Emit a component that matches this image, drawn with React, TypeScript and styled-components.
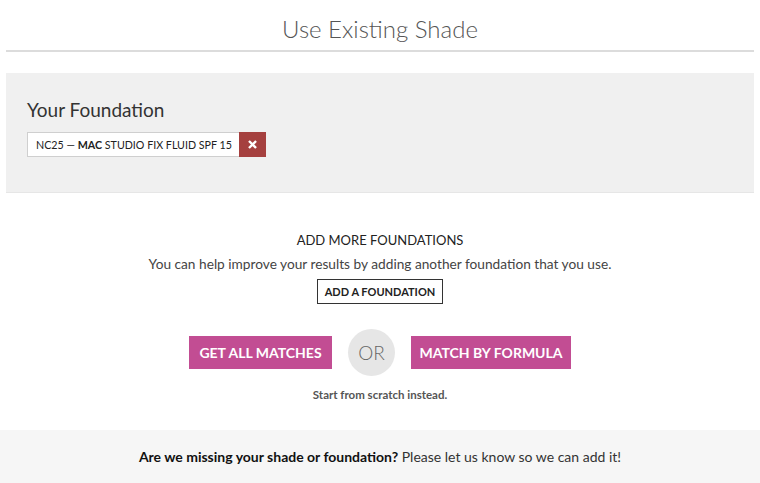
import React from 'react';
import styled, { createGlobalStyle } from 'styled-components';

const GlobalStyle = createGlobalStyle`
  body {
    margin: 0;
    background: #fff;
    font-family: Lato, "Open Sans", Arial, sans-serif;
    color: #333;
  }
`;

const Page = styled.div`
  width: 760px;
  height: 483px;
  display: flex;
  flex-direction: column;
  overflow: hidden;
`;

const Header = styled.div`
  margin: 0 6px;
  height: 52px;
  border-bottom: 2px solid #dcdcdc;
  display: flex;
  align-items: center;
  justify-content: center;
  box-sizing: border-box;
  padding-top: 6px;
`;

const Title = styled.h1`
  margin: 0;
  font-size: 24px;
  font-weight: 300;
  color: #555;
`;

const Panel = styled.section`
  margin: 21px 6px 0;
  height: 120px;
  box-sizing: border-box;
  background: #f0f0f0;
  border-bottom: 1px solid #e6e6e6;
  padding: 25px 21px 0;
`;

const PanelTitle = styled.h2`
  margin: 0 0 10px;
  font-size: 19px;
  font-weight: 400;
  color: #333;
  line-height: 24px;
`;

const Tag = styled.div`
  display: inline-flex;
  height: 25px;
`;

const TagLabel = styled.span`
  display: flex;
  align-items: center;
  padding: 0 7px 0 8px;
  background: #fff;
  border: 1px solid #cfcfcf;
  border-right: none;
  font-size: 10.7px;
  color: #222;
  white-space: pre;

  b {
    font-weight: 700;
  }
`;

const RemoveButton = styled.button`
  width: 27px;
  height: 25px;
  border: none;
  padding: 0;
  background: #a5403f;
  color: #fff;
  display: flex;
  align-items: center;
  justify-content: center;
  cursor: pointer;
`;

const Middle = styled.section`
  flex: 1;
  display: flex;
  flex-direction: column;
  align-items: center;
  padding-top: 39px;
`;

const SectionHeading = styled.h3`
  margin: 0;
  font-size: 13px;
  font-weight: 400;
  color: #222;
  line-height: 16px;
`;

const Helper = styled.p`
  margin: 7px 0 0;
  font-size: 13.7px;
  color: #444;
  line-height: 18px;
`;

const OutlineButton = styled.button`
  margin-top: 6px;
  height: 25px;
  padding: 0 7px;
  background: #fff;
  border: 1px solid #333;
  font-family: inherit;
  font-size: 11px;
  font-weight: 700;
  color: #222;
  cursor: pointer;
`;

const ChoiceRow = styled.div`
  margin-top: 25px;
  display: flex;
  align-items: center;
  gap: 16px;
`;

const PinkButton = styled.button<{ $width: number }>`
  width: ${(p) => p.$width}px;
  height: 33px;
  border: none;
  background: #c24d93;
  color: #fff;
  font-family: inherit;
  font-size: 14px;
  font-weight: 700;
  cursor: pointer;
`;

const OrBadge = styled.span`
  width: 47px;
  height: 47px;
  border-radius: 50%;
  background: #e6e6e6;
  color: #666;
  font-size: 19px;
  font-weight: 300;
  display: flex;
  align-items: center;
  justify-content: center;
`;

const ScratchLink = styled.a`
  margin-top: 12px;
  font-size: 11.5px;
  font-weight: 700;
  color: #555;
  text-decoration: none;
`;

const Footer = styled.footer`
  height: 53px;
  background: #f6f6f6;
  display: flex;
  align-items: center;
  justify-content: center;
  font-size: 14px;
  color: #333;

  b {
    color: #111;
    font-weight: 700;
  }
`;

const CrossIcon = () => (
  <svg width="9" height="9" viewBox="0 0 10 10">
    <path d="M2 2 L8 8 M8 2 L2 8" stroke="#fff" strokeWidth="2.6" strokeLinecap="square" />
  </svg>
);

const App = (): JSX.Element => {
  return (
    <Page>
      <GlobalStyle />
      <Header>
        <Title>Use Existing Shade</Title>
      </Header>
      <Panel>
        <PanelTitle>Your Foundation</PanelTitle>
        <Tag>
          <TagLabel>
            NC25 — <b>MAC</b> STUDIO FIX FLUID SPF 15
          </TagLabel>
          <RemoveButton aria-label="Remove">
            <CrossIcon />
          </RemoveButton>
        </Tag>
      </Panel>
      <Middle>
        <SectionHeading>ADD MORE FOUNDATIONS</SectionHeading>
        <Helper>You can help improve your results by adding another foundation that you use.</Helper>
        <OutlineButton>ADD A FOUNDATION</OutlineButton>
        <ChoiceRow>
          <PinkButton $width={143}>GET ALL MATCHES</PinkButton>
          <OrBadge>OR</OrBadge>
          <PinkButton $width={160}>MATCH BY FORMULA</PinkButton>
        </ChoiceRow>
        <ScratchLink href="#">Start from scratch instead.</ScratchLink>
      </Middle>
      <Footer>
        <span>
          <b>Are we missing your shade or foundation?</b> Please let us know so we can add it!
        </span>
      </Footer>
    </Page>
  );
};

export default App;
